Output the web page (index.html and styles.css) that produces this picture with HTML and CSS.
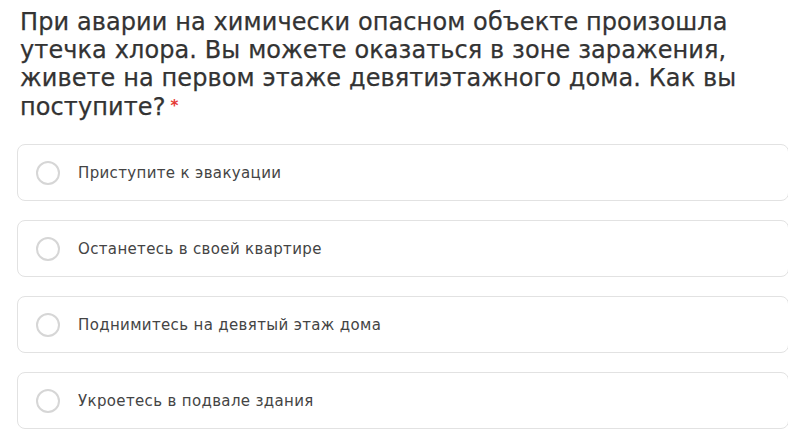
FILE: index.html
```html
<!DOCTYPE html>
<html lang="ru">
<head>
<meta charset="utf-8">
<link rel="stylesheet" href="styles.css">
</head>
<body>
<div class="question">
  <div class="title">При аварии на химически опасном объекте произошла<br>утечка хлора. Вы можете оказаться в зоне заражения,<br>живете на первом этаже девятиэтажного дома. Как вы<br>поступите?<span class="req">*</span></div>
  <div class="options">
    <label class="option"><span class="radio"></span><span class="label">Приступите к эвакуации</span></label>
    <label class="option"><span class="radio"></span><span class="label">Останетесь в своей квартире</span></label>
    <label class="option"><span class="radio"></span><span class="label">Поднимитесь на девятый этаж дома</span></label>
    <label class="option"><span class="radio"></span><span class="label">Укроетесь в подвале здания</span></label>
  </div>
</div>
</body>
</html>
```
FILE: styles.css
```css
html, body {
  margin: 0;
  padding: 0;
  background: #fff;
}
body {
  font-family: "DejaVu Sans", "Noto Sans", sans-serif;
  color: #3a3a3a;
  overflow: hidden;
}
.question {
  padding: 8px 0 0 17px;
}
.title {
  padding-left: 3px;
  font-size: 24px;
  line-height: 28px;
  font-weight: normal;
  letter-spacing: 0.1px;
  color: #333;
  white-space: nowrap;
  -webkit-text-stroke: 0.25px #333;
}
.req {
  color: #e53935;
  font-size: 15px;
  font-weight: bold;
  margin-left: 5px;
  vertical-align: 4px;
  -webkit-text-stroke: 0;
}
.options {
  margin-top: 23px;
  display: flex;
  flex-direction: column;
  gap: 19px;
}
.option {
  display: flex;
  align-items: center;
  height: 55px;
  border: 1px solid #e2e2e2;
  border-radius: 8px;
  width: 770px;
  box-sizing: content-box;
}
.radio {
  width: 20px;
  height: 20px;
  border: 2px solid #d6d6d6;
  border-radius: 50%;
  margin-left: 18px;
  flex: none;
}
.label {
  margin-left: 18px;
  font-size: 15px;
  letter-spacing: 0.35px;
  color: #444;
}
```
